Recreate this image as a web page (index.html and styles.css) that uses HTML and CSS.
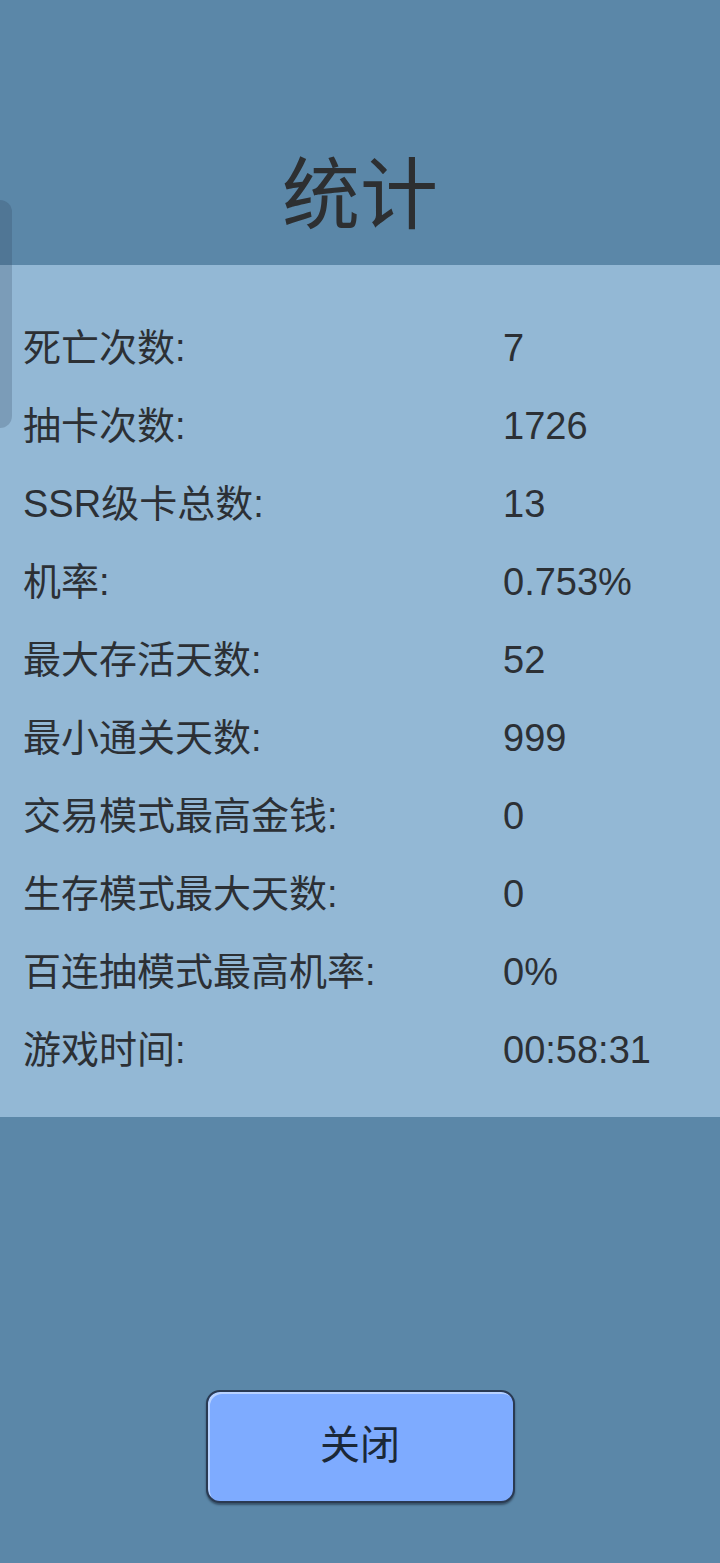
FILE: index.html
```html
<!DOCTYPE html>
<html lang="zh-CN">
<head>
  <meta charset="UTF-8">
  <title>统计</title>
  <link rel="stylesheet" href="styles.css">
</head>
<body>
  <div class="side-tab"></div>
  <div class="header">
    <h1 class="title">统计</h1>
  </div>
  <div class="panel">
    <div class="row"><span class="label">死亡次数:</span><span class="value">7</span></div>
    <div class="row"><span class="label">抽卡次数:</span><span class="value">1726</span></div>
    <div class="row"><span class="label">SSR级卡总数:</span><span class="value">13</span></div>
    <div class="row"><span class="label">机率:</span><span class="value">0.753%</span></div>
    <div class="row"><span class="label">最大存活天数:</span><span class="value">52</span></div>
    <div class="row"><span class="label">最小通关天数:</span><span class="value">999</span></div>
    <div class="row"><span class="label">交易模式最高金钱:</span><span class="value">0</span></div>
    <div class="row"><span class="label">生存模式最大天数:</span><span class="value">0</span></div>
    <div class="row"><span class="label">百连抽模式最高机率:</span><span class="value">0%</span></div>
    <div class="row"><span class="label">游戏时间:</span><span class="value">00:58:31</span></div>
  </div>
  <div class="footer">
    <button class="close-btn">关闭</button>
  </div>
</body>
</html>
```
FILE: styles.css
```css
body {
  margin: 0;
  width: 720px;
  height: 1563px;
  background-color: #5b87a8;
  font-family: "Liberation Sans", "Noto Sans CJK SC", sans-serif;
  color: #2c3035;
  overflow: hidden;
}
.side-tab {
  position: absolute;
  left: 0;
  top: 200px;
  width: 12px;
  height: 228px;
  background-color: rgba(40, 60, 80, 0.22);
  border-radius: 0 12px 12px 0;
}
.header {
  height: 265px;
  box-sizing: border-box;
  padding-top: 150px;
}
.title {
  margin: 0;
  font-family: "Noto Sans CJK SC", sans-serif;
  font-weight: 400;
  font-size: 78px;
  line-height: 78px;
  text-align: center;
  color: #2d2f31;
}
.panel {
  height: 852px;
  box-sizing: border-box;
  padding-top: 44px;
  background-color: #93b8d5;
}
.row {
  display: grid;
  grid-template-columns: 480px 1fr;
  padding-left: 23px;
  height: 78px;
  line-height: 78px;
  font-size: 38px;
}
.footer {
  padding-top: 273px;
  display: flex;
  justify-content: center;
}
.close-btn {
  width: 309px;
  height: 113px;
  padding: 0 0 10px;
  border: 2px solid #2a3a52;
  border-radius: 14px;
  background-color: #7eabff;
  box-shadow: inset 2px 2px 0 #b9d2ff, 0 2px 2px rgba(20, 30, 45, 0.5);
  font-family: "Noto Sans CJK SC", sans-serif;
  font-size: 40px;
  color: #1b2838;
  cursor: pointer;
}
```
